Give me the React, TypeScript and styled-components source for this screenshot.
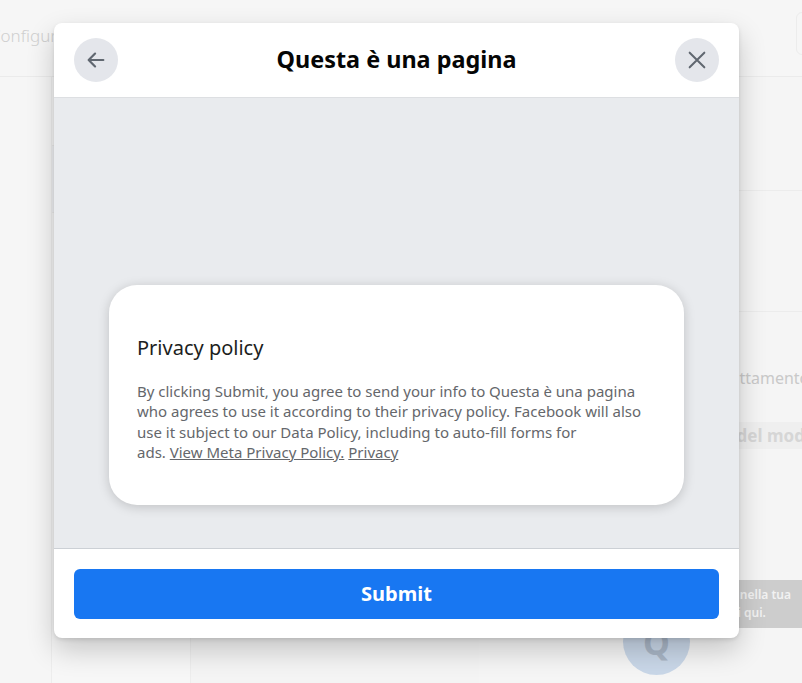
import styled, { createGlobalStyle } from "styled-components";

const GlobalStyle = createGlobalStyle`
  html, body {
    margin: 0;
    padding: 0;
    height: 683px;
    overflow: hidden;
    background: #f4f4f4;
    font-family: "Noto Sans", "Open Sans", Arial, sans-serif;
  }
`;

// faded page behind the dialog
const Page = styled.div`
  position: relative;
  width: 802px;
  height: 683px;
  overflow: hidden;
  background: #f5f5f5;
`;

const TopBar = styled.div`
  height: 76px;
  display: flex;
  align-items: center;
  justify-content: space-between;
  border-bottom: 1px solid #ebebeb;
  background: #f6f6f6;
`;

const Crumb = styled.div`
  margin-left: -10px;
  margin-top: -6px;
  font-size: 17px;
  font-weight: 300;
  color: #cfcfcf;
  white-space: nowrap;
`;

const GhostButton = styled.div`
  width: 60px;
  height: 41px;
  margin-right: -56px;
  margin-top: -10px;
  border: 1px solid #ececec;
  border-radius: 6px;
`;

const Columns = styled.div`
  display: grid;
  grid-template-columns: 52px 139px 288px 1fr;
  height: 606px;
`;

const Rail = styled.div`
  border-right: 1px solid #ededed;
  background: #f6f6f6;
`;

const ListCol = styled.div`
  display: flex;
  flex-direction: column;
  border-right: 1px solid #ededed;
  background: #f7f7f7;
`;

const ListItem = styled.div<{ $active?: boolean; $h: number }>`
  height: ${(p) => p.$h}px;
  border-bottom: 1px solid #ececec;
  background: ${(p) => (p.$active ? "#f1f2f5" : "transparent")};
`;

const MainCol = styled.div`
  background: #f4f4f4;
`;

const SideCol = styled.div`
  display: flex;
  flex-direction: column;
  background: #f5f5f5;
  white-space: nowrap;
  overflow: hidden;
`;

const SideBlock = styled.div<{ $h: number }>`
  height: ${(p) => p.$h}px;
  border-bottom: 1px solid #ececec;
`;

const SideText = styled.div`
  padding: 55px 0 0 113px;
  font-size: 16px;
  color: #c9c9c9;
`;

const SideBar = styled.div`
  margin-top: 33px;
  height: 27px;
  display: flex;
  align-items: center;
  padding-left: 189px;
  background: #efefef;
  font-size: 17px;
  font-weight: 700;
  color: #d6d6d6;
`;

const TipBar = styled.div`
  margin-top: 131px;
  margin-left: 120px;
  height: 48px;
  padding: 6px 0 0 44px;
  box-sizing: border-box;
  background: #cdcdcd;
  font-size: 12px;
  font-weight: 600;
  line-height: 18px;
  color: #f2f2f2;
`;

const Avatar = styled.div`
  position: absolute;
  left: 623px;
  top: 608px;
  width: 67px;
  height: 67px;
  border-radius: 50%;
  background: #c9d7e8;
  display: flex;
  align-items: center;
  justify-content: center;
  font-size: 34px;
  font-weight: 700;
  color: #a9b6c6;
`;

// dialog
const Overlay = styled.div`
  position: absolute;
  inset: 0;
  display: flex;
  align-items: flex-start;
  padding: 23px 0 0 54px;
`;

const Dialog = styled.div`
  width: 685px;
  height: 615px;
  display: flex;
  flex-direction: column;
  background: #fff;
  border-radius: 8px;
  overflow: hidden;
  box-shadow: 0 12px 28px 0 rgba(0, 0, 0, 0.2), 0 2px 4px 0 rgba(0, 0, 0, 0.1);
`;

const Header = styled.div`
  height: 74px;
  display: flex;
  align-items: center;
  justify-content: space-between;
  padding: 0 20px;
  border-bottom: 1px solid #dddfe2;
`;

const Title = styled.h1`
  margin: 0 0 2px;
  font-size: 23.4px;
  font-weight: 700;
  color: #050505;
`;

const RoundButton = styled.button`
  width: 44px;
  height: 44px;
  border: 0;
  padding: 0;
  border-radius: 50%;
  background: #e4e6eb;
  display: flex;
  align-items: center;
  justify-content: center;
  color: #606770;
`;

const Body = styled.div`
  flex: 1;
  display: flex;
  flex-direction: column;
  justify-content: flex-end;
  padding: 0 55px 43px;
  background: #e9ebee;
  border-bottom: 1px solid #ccd0d5;
`;

const Card = styled.div`
  height: 220px;
  box-sizing: border-box;
  padding: 50px 28px 0;
  background: #fff;
  border-radius: 28px;
  box-shadow: 0 2px 12px rgba(0, 0, 0, 0.18);
`;

const CardTitle = styled.h2`
  margin: 0 0 20px;
  font-size: 20px;
  line-height: 26px;
  font-weight: 400;
  color: #1c1e21;
`;

const Legal = styled.p`
  margin: 0;
  font-size: 15px;
  line-height: 20.3px;
  color: #65676b;
`;

const KeepTogether = styled.span`
  white-space: nowrap;
`;

const Link = styled.a`
  color: #65676b;
  text-decoration: underline;
`;

const Footer = styled.div`
  height: 89px;
  display: flex;
  align-items: center;
  padding: 0 20px;
`;

const Submit = styled.button`
  width: 100%;
  height: 50px;
  border: 0;
  border-radius: 6px;
  background: #1877f2;
  color: #fff;
  font-family: inherit;
  font-size: 20px;
  font-weight: 700;
`;

const App = () => {
  return (
    <>
      <GlobalStyle />
      <Page>
        <TopBar>
          <Crumb>Configurazione</Crumb>
          <GhostButton />
        </TopBar>
        <Columns>
          <Rail />
          <ListCol>
            <ListItem $h={68} />
            <ListItem $h={66} $active />
          </ListCol>
          <MainCol />
          <SideCol>
            <SideBlock $h={113} />
            <SideBlock $h={120} />
            <SideText>Informazioni sul trattamento dei dati</SideText>
            <SideBar>Termini del modulo</SideBar>
            <TipBar>
              Trovi questi dati nella tua
              <br />
              Puoi vederli tutti qui.
            </TipBar>
          </SideCol>
        </Columns>
        <Avatar>Q</Avatar>
        <Overlay>
          <Dialog>
            <Header>
              <RoundButton aria-label="Indietro">
                <svg width="22" height="22" viewBox="0 0 24 24" fill="none">
                  <path
                    d="M20 12H5M11 5l-7 7 7 7"
                    stroke="currentColor"
                    strokeWidth="2.4"
                    strokeLinecap="round"
                    strokeLinejoin="round"
                  />
                </svg>
              </RoundButton>
              <Title>Questa è una pagina</Title>
              <RoundButton aria-label="Chiudi">
                <svg width="22" height="22" viewBox="0 0 24 24" fill="none">
                  <path
                    d="M4 4l16 16M20 4L4 20"
                    stroke="currentColor"
                    strokeWidth="2.2"
                    strokeLinecap="round"
                  />
                </svg>
              </RoundButton>
            </Header>
            <Body>
              <Card>
                <CardTitle>Privacy policy</CardTitle>
                <Legal>
                  By clicking Submit, you agree to send your info to Questa è
                  una pagina who agrees to use it according to their privacy
                  policy. Facebook will also use it subject to our Data Policy,
                  including to auto-fill forms for{" "}
                  <KeepTogether>
                    ads. <Link>View Meta Privacy Policy.</Link>
                  </KeepTogether>{" "}
                  <Link>Privacy</Link>
                </Legal>
              </Card>
            </Body>
            <Footer>
              <Submit>Submit</Submit>
            </Footer>
          </Dialog>
        </Overlay>
      </Page>
    </>
  );
};

export default App;
